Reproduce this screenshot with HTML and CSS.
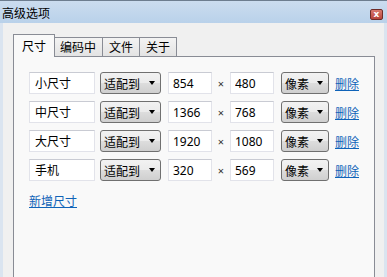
FILE: index.html
```html
<!DOCTYPE html>
<html lang="zh-CN">
<head>
    <meta charset="UTF-8">
    <title>高级选项</title>
    <link rel="stylesheet" href="styles.css">
</head>
<body>

<div class="window">
    <!-- Title bar -->
    <div class="titlebar">
        <span class="title">高级选项</span>
        <span class="close">x</span>
    </div>

    <div class="content">
        <!-- Tabs -->
        <div class="tabs">
            <div class="tab active">尺寸</div>
            <div class="tab">编码中</div>
            <div class="tab">文件</div>
            <div class="tab">关于</div>
        </div>

        <!-- Size list -->
        <div class="panel">
            <div class="row">
                <input type="text" class="name" value="小尺寸">
                <div class="dropdown fit">适配到<span class="arrow"></span></div>
                <input type="text" class="num" value="854">
                <span class="times">×</span>
                <input type="text" class="num" value="480">
                <div class="dropdown unit">像素<span class="arrow"></span></div>
                <a href="#" class="link">删除</a>
            </div>
            <div class="row">
                <input type="text" class="name" value="中尺寸">
                <div class="dropdown fit">适配到<span class="arrow"></span></div>
                <input type="text" class="num" value="1366">
                <span class="times">×</span>
                <input type="text" class="num" value="768">
                <div class="dropdown unit">像素<span class="arrow"></span></div>
                <a href="#" class="link">删除</a>
            </div>
            <div class="row">
                <input type="text" class="name" value="大尺寸">
                <div class="dropdown fit">适配到<span class="arrow"></span></div>
                <input type="text" class="num" value="1920">
                <span class="times">×</span>
                <input type="text" class="num" value="1080">
                <div class="dropdown unit">像素<span class="arrow"></span></div>
                <a href="#" class="link">删除</a>
            </div>
            <div class="row">
                <input type="text" class="name" value="手机">
                <div class="dropdown fit">适配到<span class="arrow"></span></div>
                <input type="text" class="num" value="320">
                <span class="times">×</span>
                <input type="text" class="num" value="569">
                <div class="dropdown unit">像素<span class="arrow"></span></div>
                <a href="#" class="link">删除</a>
            </div>

            <a href="#" class="link add">新增尺寸</a>
        </div>
    </div>
</div>

</body>
</html>
```

FILE: styles.css
```css
* {
    box-sizing: border-box;
}
body {
    margin: 0;
    font-family: "Noto Sans", "Noto Sans CJK SC", sans-serif;
    font-size: 12px;
    color: #000;
    overflow: hidden;
}
.window {
    width: 387px;
    height: 277px;
    display: flex;
    flex-direction: column;
    background-color: #f0f0f0;
}
.titlebar {
    height: 23px;
    display: flex;
    align-items: center;
    justify-content: space-between;
    padding: 1px 4px 0 2px;
    border-top: 1px solid #6d7d8f;
    background: linear-gradient(#cbdcef, #b9d1ea);
}
.title {
    font-family: "Noto Sans CJK SC", sans-serif;
    font-size: 12px;
    line-height: 14px;
}
.close {
    width: 13px;
    height: 11px;
    margin-top: 3px;
    border: 1px solid #6e2b27;
    border-radius: 2px;
    background: linear-gradient(#d87a70, #b8443c);
    color: #fff;
    font-family: "DejaVu Sans", sans-serif;
    font-weight: bold;
    font-size: 9px;
    line-height: 8px;
    text-align: center;
}
.content {
    flex: 1;
    display: flex;
    flex-direction: column;
    padding: 11px 9px 0 10px;
    border-left: 3px solid #dae4f0;
    border-right: 3px solid #dae4f0;
}
.tabs {
    display: flex;
    align-items: flex-end;
    height: 22px;
}
.tab {
    height: 19px;
    padding: 0 6px;
    margin-left: -1px;
    border: 1px solid #898c95;
    border-bottom: none;
    background: linear-gradient(#f3f3f3, #e3e3e3);
    font-family: "Noto Sans CJK SC", sans-serif;
    line-height: 18px;
}
.tab.active {
    height: 23px;
    margin-left: 0;
    margin-right: -1px;
    margin-bottom: -1px;
    padding: 0 8px;
    background: #f9f9f9;
    line-height: 22px;
    position: relative;
    z-index: 1;
}
.panel {
    flex: 1;
    padding: 15px 0 0 15px;
    border: 1px solid #898c95;
    border-bottom: none;
    background-color: #f9f9f9;
}
.row {
    display: flex;
    align-items: center;
    height: 22px;
    margin-bottom: 7px;
}
input {
    height: 22px;
    margin: 0;
    padding: 0 5px;
    border: 1px solid #e2e3ea;
    border-top-color: #c9cbd3;
    background: #fff;
    font-family: "Noto Sans", "Noto Sans CJK SC", sans-serif;
    font-size: 12px;
    color: #000;
}
.name {
    width: 66px;
}
.num {
    width: 44px;
    padding-left: 4px;
}
.times {
    width: 18px;
    text-align: center;
    font-size: 11px;
    color: #333;
}
.dropdown {
    height: 22px;
    display: flex;
    align-items: center;
    justify-content: space-between;
    padding: 0 5px 0 3px;
    border: 1px solid #707070;
    border-radius: 3px;
    background: linear-gradient(#f2f2f2 0%, #ebebeb 50%, #dddddd 51%, #cfcfcf 100%);
    font-family: "Noto Sans CJK SC", sans-serif;
}
.fit {
    width: 61px;
    margin: 0 7px 0 5px;
}
.unit {
    width: 48px;
    margin: 0 6px 0 7px;
}
.arrow {
    width: 0;
    height: 0;
    border-left: 3px solid transparent;
    border-right: 3px solid transparent;
    border-top: 4px solid #000;
}
.link {
    color: #0f63b8;
    font-family: "Noto Sans CJK SC", sans-serif;
    text-decoration: underline;
}
.add {
    display: inline-block;
    margin-top: 6px;
    line-height: 14px;
}
```
